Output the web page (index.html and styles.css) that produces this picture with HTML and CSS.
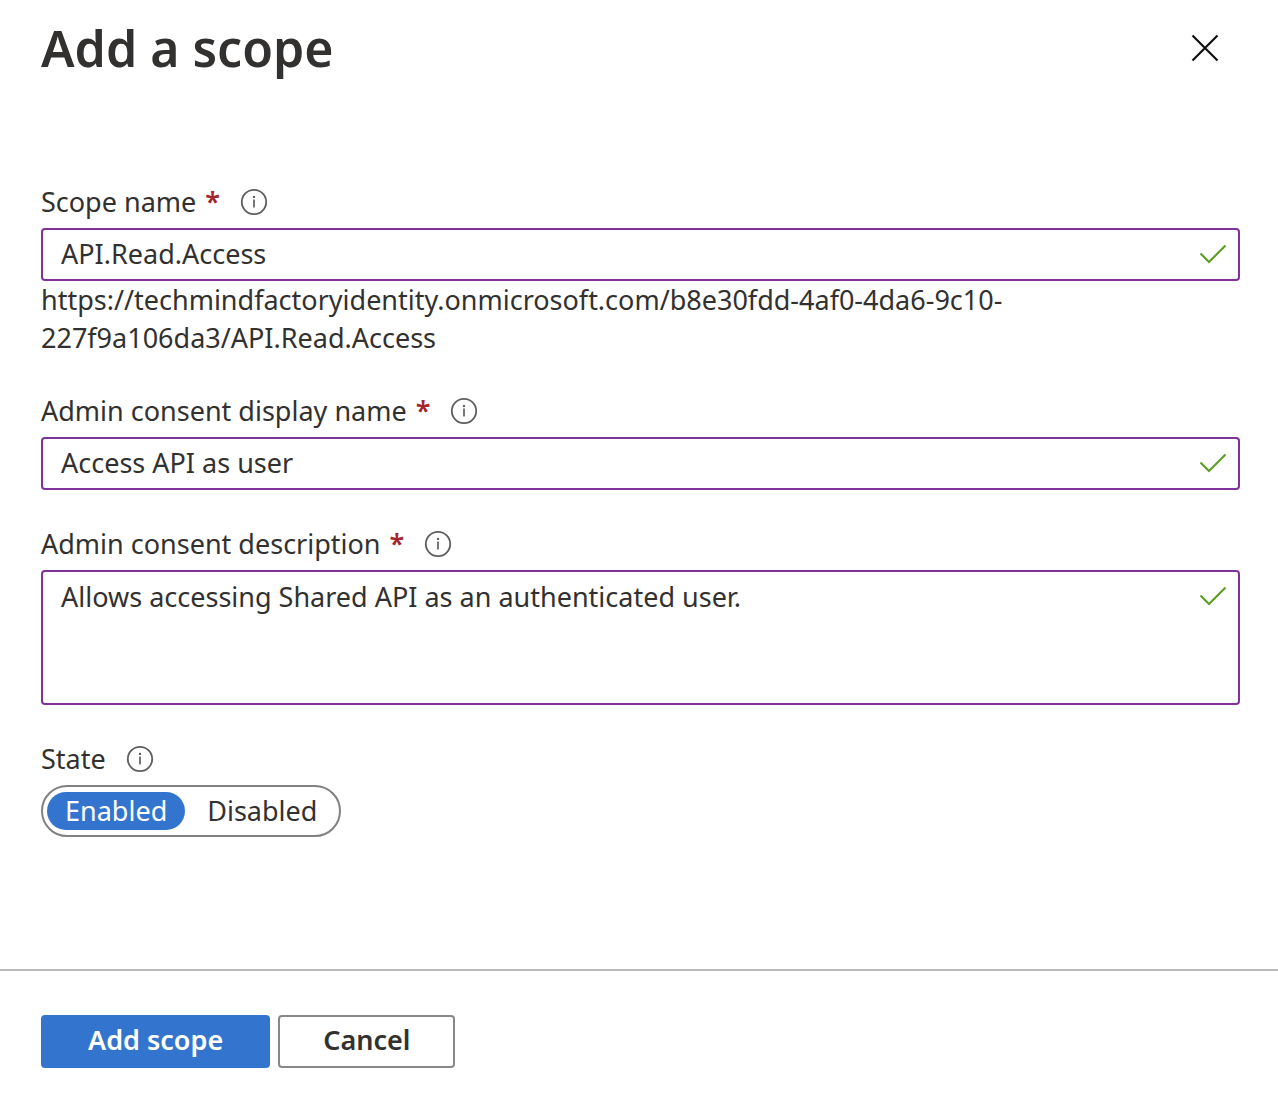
FILE: index.html
```html
<!DOCTYPE html>
<html lang="en">
<head>
<meta charset="utf-8">
<meta name="viewport" content="width=device-width, initial-scale=1">
<title>Add a scope</title>
<link rel="stylesheet" href="styles.css">
</head>
<body>
<svg class="sprite" aria-hidden="true">
  <symbol id="info" viewBox="0 0 28 28">
    <circle cx="14" cy="14" r="12.2" fill="none" stroke="#605e5c" stroke-width="1.8"/>
    <path d="M14 11.4V19.6" stroke="#605e5c" stroke-width="1.7"/>
    <circle cx="14" cy="8.9" r="1.2" fill="#605e5c"/>
  </symbol>
  <symbol id="check" viewBox="0 0 28 20">
    <path d="M1.5 9.5L10 18L26.5 1.5" fill="none" stroke="#5f9f26" stroke-width="2.2"/>
  </symbol>
</svg>
<form class="panel">
  <header class="panel-header">
    <h1 class="title">Add a scope</h1>
    <button class="close" type="button" aria-label="Close">
      <svg width="28" height="28" viewBox="0 0 28 28"><path d="M1.5 1.5L26.5 26.5M26.5 1.5L1.5 26.5" stroke="#111" stroke-width="2.2"/></svg>
    </button>
  </header>
  <main class="fields">
    <div class="field">
      <div class="label-row">
        <label for="scope-name">Scope name <span class="required">*</span></label>
        <button class="info" type="button" aria-label="About scope name"><svg><use href="#info"/></svg></button>
      </div>
      <div class="control">
        <input class="box" id="scope-name" type="text" value="API.Read.Access">
        <svg class="check"><use href="#check"/></svg>
      </div>
      <p class="scope-url">https://techmindfactoryidentity.onmicrosoft.com/b8e30fdd-4af0-4da6-9c10-<wbr>227f9a106da3/API.Read.Access</p>
    </div>
    <div class="field">
      <div class="label-row">
        <label for="display-name">Admin consent display name <span class="required">*</span></label>
        <button class="info" type="button" aria-label="About display name"><svg><use href="#info"/></svg></button>
      </div>
      <div class="control">
        <input class="box" id="display-name" type="text" value="Access API as user">
        <svg class="check"><use href="#check"/></svg>
      </div>
    </div>
    <div class="field">
      <div class="label-row">
        <label for="description">Admin consent description <span class="required">*</span></label>
        <button class="info" type="button" aria-label="About description"><svg><use href="#info"/></svg></button>
      </div>
      <div class="control">
        <textarea class="box box-tall" id="description">Allows accessing Shared API as an authenticated user.</textarea>
        <svg class="check"><use href="#check"/></svg>
      </div>
    </div>
    <div class="field">
      <div class="label-row">
        <span id="state-label">State</span>
        <button class="info" type="button" aria-label="About state"><svg><use href="#info"/></svg></button>
      </div>
      <div class="toggle" role="radiogroup" aria-labelledby="state-label">
        <input class="toggle-input" type="radio" name="state" id="enabled" checked>
        <label class="toggle-option" for="enabled">Enabled</label>
        <input class="toggle-input" type="radio" name="state" id="disabled">
        <label class="toggle-option" for="disabled">Disabled</label>
      </div>
    </div>
  </main>
  <footer class="actions">
    <button class="button primary" type="submit">Add scope</button>
    <button class="button" type="button">Cancel</button>
  </footer>
</form>
</body>
</html>
```
FILE: styles.css
```css
* { box-sizing: border-box; }

body {
  margin: 0;
  background: #fff;
  color: #323130;
  font: 27px/38px "Noto Sans", "Open Sans", sans-serif;
}

button, input, textarea { font: inherit; color: inherit; }

.sprite { position: absolute; width: 0; height: 0; }

.panel {
  display: flex;
  flex-direction: column;
  min-height: 100vh;
}

.panel-header {
  display: flex;
  justify-content: space-between;
  align-items: center;
  padding: 12px 59px 0 41px;
}

.title {
  margin: 0;
  font-size: 50px;
  line-height: 72px;
  font-weight: 600;
}

.close {
  display: flex;
  padding: 0;
  border: 0;
  background: none;
}

.fields {
  flex: 1;
  display: flex;
  flex-direction: column;
  gap: 35px;
  padding: 99px 38px 36px 41px;
}

.label-row {
  display: flex;
  align-items: center;
  gap: 20px;
  margin-bottom: 7px;
}

.required {
  margin-left: 2px;
  color: #a4262c;
  font-weight: 600;
}

.info {
  display: flex;
  padding: 0;
  border: 0;
  background: none;
}

.info svg { width: 28px; height: 28px; }

.control { position: relative; display: flex; }

.box {
  width: 100%;
  height: 53px;
  padding: 0 60px 3px 18px;
  border: 2px solid #7f3298;
  border-radius: 4px;
  background: #fff;
  outline: 0;
}

.box-tall {
  height: 135px;
  padding-top: 6px;
  resize: none;
}

.check {
  position: absolute;
  top: 16px;
  right: 13px;
  width: 28px;
  height: 20px;
}

.scope-url { margin: 0; overflow-wrap: anywhere; }

.toggle {
  display: inline-flex;
  position: relative;
  gap: 4px;
  padding: 5px 4px;
  border: 2px solid #838180;
  border-radius: 26px;
}

.toggle-input {
  position: absolute;
  opacity: 0;
}

.toggle-option {
  padding: 0 18px;
  border-radius: 20px;
}

.toggle-input:checked + .toggle-option {
  background: #3375ce;
  color: #fff;
}

.actions {
  display: flex;
  gap: 8px;
  padding: 44px 41px 38px;
  border-top: 2px solid #bab9b8;
}

.button {
  height: 53px;
  padding: 0 43px 3px;
  border: 2px solid #8a8886;
  border-radius: 4px;
  background: #fff;
  font-weight: 600;
}

.primary {
  padding: 0 45px 3px;
  border-color: #3375ce;
  background: #3375ce;
  color: #fff;
}
```
